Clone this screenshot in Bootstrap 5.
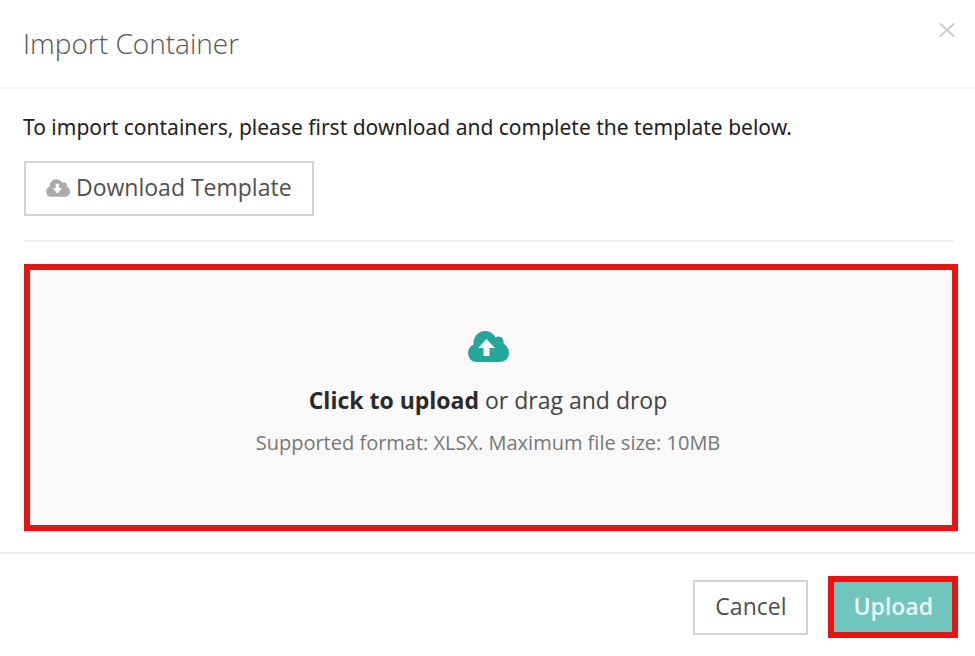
<!DOCTYPE html>
<html lang="en">
<head>
<meta charset="utf-8">
<meta name="viewport" content="width=device-width, initial-scale=1">
<title>Import Container</title>
<link href="https://cdn.jsdelivr.net/npm/bootstrap@5.3.0/dist/css/bootstrap.min.css" rel="stylesheet">
<style>
body { font-family: "Open Sans", "Noto Sans", sans-serif; color: #222; background: #fff; }
.import-head { padding: 23px 20px 24px 23px; border-bottom: 2px solid #f0f0f0; }
.import-title { font-size: 28px; line-height: 40px; font-weight: 300; color: #555; }
.btn-dismiss { line-height: 0; color: #ccc; }
.import-body { padding: 22px 17px 21px 24px; }
.intro { font-family: "Noto Sans", "Open Sans", sans-serif; font-size: 21px; line-height: 32px; margin: 0 0 18px -1px; }
.btn-flat { font-size: 23px; line-height: 31px; padding: 9px 20px 11px; border: 2px solid #d4d4d4; border-radius: 0; background: #fff; color: #505050; }
.btn-flat:hover { background: #f5f5f5; border-color: #bbb; }
.btn-flat svg { color: #aaa; margin-right: 6px; }
.rule { margin: 24px 4px 22px 0; border-top: 2px solid #f0f0f0; opacity: 1; }
.dropzone { display: flex; height: 267px; padding: 0 6px 7px 0; border: 6px solid #e81313; background: #f9f9f9; cursor: pointer; }
.drop-icon { color: #26a69a; }
.drop-main { font-size: 23px; line-height: 32px; color: #444; margin-top: 22px; }
.drop-main strong { color: #2a2a2a; font-weight: 700; }
.drop-note { font-size: 20px; line-height: 28px; color: #777; margin-top: 13px; }
.import-foot { padding: 22px 17px 16px 24px; gap: 20px; border-top: 2px solid #ececec; }
.btn-send { font-size: 23px; line-height: 31px; padding: 9px 19px 10px; font-weight: 600; border: 6px solid #e81313; border-radius: 0; background: #70c5bd; color: #eefaf8; }
.btn-send:hover { background: #5cb9b0; border-color: #e81313; color: #fff; }
</style>
<script src="https://cdn.jsdelivr.net/npm/bootstrap@5.3.0/dist/js/bootstrap.bundle.min.js"></script>
</head>
<body>
<main>
  <header class="import-head d-flex justify-content-between align-items-start">
    <h1 class="import-title mb-0">Import Container</h1>
    <button type="button" class="btn-dismiss btn p-0 border-0" aria-label="Close">
      <svg width="16" height="14" viewBox="0 0 16 14" fill="none" stroke="currentColor" stroke-width="2" stroke-linecap="round"><path d="M1.500 1 14.500 13M14.500 1 1.500 13"/></svg>
    </button>
  </header>
  <section class="import-body">
    <p class="intro">To import containers, please first download and complete the template below.</p>
    <button type="button" class="btn btn-flat d-inline-flex align-items-center">
      <svg width="24" height="18" viewBox="0 0 42 31" fill="currentColor" fill-rule="evenodd" aria-hidden="true"><path d="M9 31A9 9 0 0 1 6.500 13.500C6 5.500 11.500 0 18 0c5 0 8.500 2.500 10.500 6.500 4-2.500 9 .5 8 6C40 14.500 42 18 42 22c0 5-4 9-9 9ZM17 8v8h-5.500l8.500 9 8.500-9H23V8Z"/></svg>
      <span>Download Template</span>
    </button>
    <hr class="rule">
    <label class="dropzone flex-column align-items-center justify-content-center text-center" for="file">
      <svg class="drop-icon" width="42" height="31" viewBox="0 0 42 31" fill="currentColor" fill-rule="evenodd" aria-hidden="true"><path d="M9 31A9.200 9.200 0 0 1 6.500 13.500C6 5.500 11.500 0 18 0c5 0 8.500 2.500 10.500 6.500 4-2.500 9 .5 8 6C40 14.500 42 18 42 22c0 5-4 9-9 9ZM16.500 25h6v-8h5.500l-8.500-9-8.500 9h5.500Z"/></svg>
      <span class="drop-main"><strong>Click to upload</strong> or drag and drop</span>
      <span class="drop-note">Supported format: XLSX. Maximum file size: 10MB</span>
      <input type="file" id="file" class="visually-hidden" accept=".xlsx">
    </label>
  </section>
  <footer class="import-foot d-flex justify-content-end align-items-center">
    <button type="button" class="btn btn-flat">Cancel</button>
    <button type="button" class="btn btn-send">Upload</button>
  </footer>
</main>
</body>
</html>
